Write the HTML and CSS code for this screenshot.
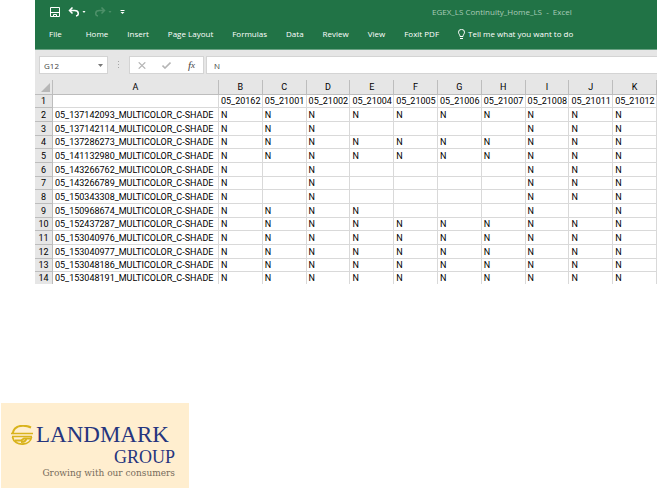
FILE: index.html
```html
<!DOCTYPE html>
<html lang="en">
<head>
<meta charset="utf-8">
<title>EGEX_LS Continuity_Home_LS - Excel</title>
<link rel="stylesheet" href="styles.css">
</head>
<body>
<main class="workbook">
  <header class="ribbon">
    <div class="titlebar">
      <div class="quick">
        <button type="button" aria-label="Save"><svg width="10" height="10" viewBox="0 0 10 10" fill="none" stroke="#fff"><path d="M.5.5h9v9h-9zM1 5.500h8M3.500 9.500v-2h3v2"/></svg></button>
        <button type="button" aria-label="Undo"><svg width="18" height="10" viewBox="0 0 18 10" fill="none" stroke="#fff" stroke-width="1.500"><path d="M4.500.5 1.500 3.500l3 3M2 3.500h4.500c5 0 4.500 5 1.500 5.500"/><path d="M14.500 4h3L16 6z" fill="#fff" stroke="none"/></svg></button>
        <button type="button" aria-label="Redo"><svg width="18" height="10" viewBox="0 0 18 10" fill="none" stroke="#4d9069" stroke-width="1.500"><path d="m7.500.5 3 3-3 3M10 3.500H5.500c-5 0-4.500 5-1.500 5.500"/><path d="M14.500 4h3L16 6z" fill="#4d9069" stroke="none"/></svg></button>
        <button type="button" aria-label="Customize toolbar"><svg width="5" height="6" viewBox="0 0 5 6" fill="#fff"><path d="M.5 1h4v1h-4zM.5 3h4l-2 2z"/></svg></button>
      </div>
      <div class="doc-name">EGEX_LS Continuity_Home_LS &nbsp;-&nbsp; Excel</div>
    </div>
    <nav class="tabs">
      <a class="file" href="#">File</a><a href="#">Home</a><a href="#">Insert</a><a href="#">Page Layout</a><a href="#">Formulas</a><a href="#">Data</a><a href="#">Review</a><a href="#">View</a><a href="#">Foxit PDF</a>
      <a class="tell" href="#"><svg width="7" height="10" viewBox="0 0 7 10" fill="none" stroke="#fff"><path d="M2 7.500C2 5.500.5 5 .5 3.200a3 2.800 0 0 1 6 0C6.500 5 5 5.500 5 7.500zM2 9.500h3"/></svg>Tell me what you want to do</a>
    </nav>
  </header>
  <div class="formula-bar">
    <div class="name-box"><input aria-label="Name box" value="G12"><button type="button" aria-label="Show names"><svg width="5" height="3" viewBox="0 0 5 3"><path d="M0 0h5L2.500 3z" fill="#777"/></svg></button></div>
    <svg class="grip" width="2" height="8" viewBox="0 0 2 8" fill="#a6a6a6"><path d="M0 0h1v1H0zM0 3h1v1H0zM0 6h1v1H0z"/></svg>
    <div class="actions">
      <button type="button" aria-label="Cancel"><svg width="8" height="7" viewBox="0 0 8 7" stroke="#b5b5b5" stroke-width="1.200"><path d="m.7.3 6.600 6.400M7.300.3.7 6.700"/></svg></button>
      <button type="button" aria-label="Enter"><svg width="9" height="7" viewBox="0 0 9 7" fill="none" stroke="#b5b5b5" stroke-width="1.600"><path d="m.5 3.500 2.500 2.500L8.500.6"/></svg></button>
      <button type="button" class="fx" aria-label="Insert function">f<small>x</small></button>
    </div>
    <input class="formula" aria-label="Formula" value="N">
  </div>
  <table class="sheet">
    <colgroup><col class="col-num"><col class="col-name"><col span="10"></colgroup>
    <thead><tr><th class="corner"><svg width="9" height="9" viewBox="0 0 9 9"><path d="M9 0v9H0z" fill="#b7b7b7"/></svg></th><th>A</th><th>B</th><th>C</th><th>D</th><th>E</th><th>F</th><th>G</th><th>H</th><th>I</th><th>J</th><th>K</th></tr></thead>
    <tbody>
      <tr><th>1</th><td></td><td>05_20162</td><td>05_21001</td><td>05_21002</td><td>05_21004</td><td>05_21005</td><td>05_21006</td><td>05_21007</td><td>05_21008</td><td>05_21011</td><td>05_21012</td></tr>
      <tr><th>2</th><td>05_137142093_MULTICOLOR_C-SHADE</td><td>N</td><td>N</td><td>N</td><td>N</td><td>N</td><td>N</td><td>N</td><td>N</td><td>N</td><td>N</td></tr>
      <tr><th>3</th><td>05_137142114_MULTICOLOR_C-SHADE</td><td>N</td><td>N</td><td>N</td><td></td><td></td><td></td><td></td><td>N</td><td>N</td><td>N</td></tr>
      <tr><th>4</th><td>05_137286273_MULTICOLOR_C-SHADE</td><td>N</td><td>N</td><td>N</td><td>N</td><td>N</td><td>N</td><td>N</td><td>N</td><td>N</td><td>N</td></tr>
      <tr><th>5</th><td>05_141132980_MULTICOLOR_C-SHADE</td><td>N</td><td>N</td><td>N</td><td>N</td><td>N</td><td>N</td><td>N</td><td>N</td><td>N</td><td>N</td></tr>
      <tr><th>6</th><td>05_143266762_MULTICOLOR_C-SHADE</td><td>N</td><td></td><td>N</td><td></td><td></td><td></td><td></td><td>N</td><td>N</td><td>N</td></tr>
      <tr><th>7</th><td>05_143266789_MULTICOLOR_C-SHADE</td><td>N</td><td></td><td>N</td><td></td><td></td><td></td><td></td><td>N</td><td>N</td><td>N</td></tr>
      <tr><th>8</th><td>05_150343308_MULTICOLOR_C-SHADE</td><td>N</td><td></td><td>N</td><td></td><td></td><td></td><td></td><td>N</td><td>N</td><td>N</td></tr>
      <tr><th>9</th><td>05_150968674_MULTICOLOR_C-SHADE</td><td>N</td><td>N</td><td>N</td><td>N</td><td></td><td></td><td></td><td>N</td><td></td><td>N</td></tr>
      <tr><th>10</th><td>05_152437287_MULTICOLOR_C-SHADE</td><td>N</td><td>N</td><td>N</td><td>N</td><td>N</td><td>N</td><td>N</td><td>N</td><td>N</td><td>N</td></tr>
      <tr><th>11</th><td>05_153040976_MULTICOLOR_C-SHADE</td><td>N</td><td>N</td><td>N</td><td>N</td><td>N</td><td>N</td><td>N</td><td>N</td><td>N</td><td>N</td></tr>
      <tr><th>12</th><td>05_153040977_MULTICOLOR_C-SHADE</td><td>N</td><td>N</td><td>N</td><td>N</td><td>N</td><td>N</td><td>N</td><td>N</td><td>N</td><td>N</td></tr>
      <tr><th>13</th><td>05_153048186_MULTICOLOR_C-SHADE</td><td>N</td><td>N</td><td>N</td><td>N</td><td>N</td><td>N</td><td>N</td><td>N</td><td>N</td><td>N</td></tr>
      <tr><th>14</th><td>05_153048191_MULTICOLOR_C-SHADE</td><td>N</td><td>N</td><td>N</td><td>N</td><td>N</td><td>N</td><td>N</td><td>N</td><td>N</td><td>N</td></tr>
    </tbody>
  </table>
</main>
<footer class="brand">
  <div class="brand-row">
    <svg width="22" height="21" viewBox="0 0 22 21" fill="none" stroke="#d9b31c"><path d="M20 2.500C16 .5 8-.5 4 3.500 2.500 5 1.800 7 1.500 9" stroke-width="2"/><path d="M0 8.500h22M1 11.500h20" stroke-width="1.600"/><path d="M1.500 12c1 5 5.500 7.300 10.500 7 4.500-.2 8-3 8.500-7M4 15.500h6l3-2h7M10 17c3 0 5-1 5.500-3.500" stroke-width="1.800"/></svg>
    <span class="brand-name">LANDMARK</span>
  </div>
  <div class="brand-group">GROUP</div>
  <div class="brand-tag">Growing with our consumers</div>
</footer>
</body>
</html>
```
FILE: styles.css
```css
* { box-sizing: border-box; }
body {
  margin: 0;
  min-height: 100vh;
  display: flex;
  flex-direction: column;
  justify-content: space-between;
  background: #fff;
  font-family: "Open Sans", "Noto Sans", sans-serif;
  font-size: 8px;
}
button, input { font: inherit; border: 0; padding: 0; background: none; color: inherit; }
button { display: flex; align-items: center; justify-content: center; }
svg { display: block; flex: none; }
.workbook { margin-left: 35px; }

.ribbon { background: #217346; color: #fff; border-bottom: 1px solid #6ba284; }
.titlebar { display: flex; align-items: center; height: 23px; padding-left: 15px; }
.quick { display: flex; align-items: center; gap: 8px; }
.doc-name { flex: 1; padding-left: 307px; color: #a9cbb8; white-space: nowrap; }
.tabs { display: flex; align-items: center; gap: 19px; height: 26px; padding: 0 14px 5px; white-space: nowrap; }
.tabs a { color: #fff; text-decoration: none; }
.tabs .file { margin-right: 5px; }
.tabs .tell { display: flex; align-items: center; gap: 3px; }

.formula-bar { display: flex; align-items: center; height: 30px; padding: 6px 0 6px 4px; background: #e6e6e6; color: #444; }
.name-box, .actions { display: flex; align-items: center; height: 18px; background: #fff; border: 1px solid #d4d4d4; }
.name-box { width: 69px; padding: 0 4px; }
.name-box input { flex: 1; min-width: 0; }
.grip { margin: 0 9px 0 10px; }
.actions { width: 75px; padding: 0 8px; justify-content: space-between; }
.fx { font: italic 11px "Liberation Serif", serif; }
.fx small { font-size: 9px; }
.formula { flex: 1; min-width: 0; height: 18px; margin-left: 2px; padding-left: 7px; background: #fff; border: 1px solid #d4d4d4; border-right: 0; }

.sheet { width: 100%; table-layout: fixed; border-collapse: separate; border-spacing: 0; font-family: Roboto, "Open Sans", sans-serif; font-size: 9px; line-height: 12px; color: #000; }
.col-num { width: 18px; }
.col-name { width: 166px; }
.sheet th, .sheet td { height: 14px; padding: 0; border-right: 1px solid #d9d9d9; border-bottom: 1px solid #d9d9d9; white-space: nowrap; }
.sheet td { padding-left: 2px; text-align: left; }
.sheet th { background: #e6e6e6; font-weight: 400; border-color: #bdbdbd; }
.sheet thead th { height: 15px; }
.sheet tbody tr:nth-child(3n+1) > * { height: 13px; }
.sheet tbody tr:last-child > * { height: 12px; border-bottom: 0; }
.corner svg { margin: 1px 2px 0 auto; }

.brand { align-self: flex-start; width: 188px; height: 85px; margin-left: 1px; padding: 20px 14px 0 10px; background: #ffeecf; color: #26357e; font-family: "Liberation Serif", serif; text-align: right; white-space: nowrap; }
.brand-row { display: flex; align-items: center; gap: 3px; }
.brand-name { font-size: 23px; line-height: 24px; }
.brand-group { font-size: 18px; line-height: 20px; }
.brand-tag { font-family: "DejaVu Serif", serif; font-size: 9px; line-height: 12px; color: #776c5c; }
```
